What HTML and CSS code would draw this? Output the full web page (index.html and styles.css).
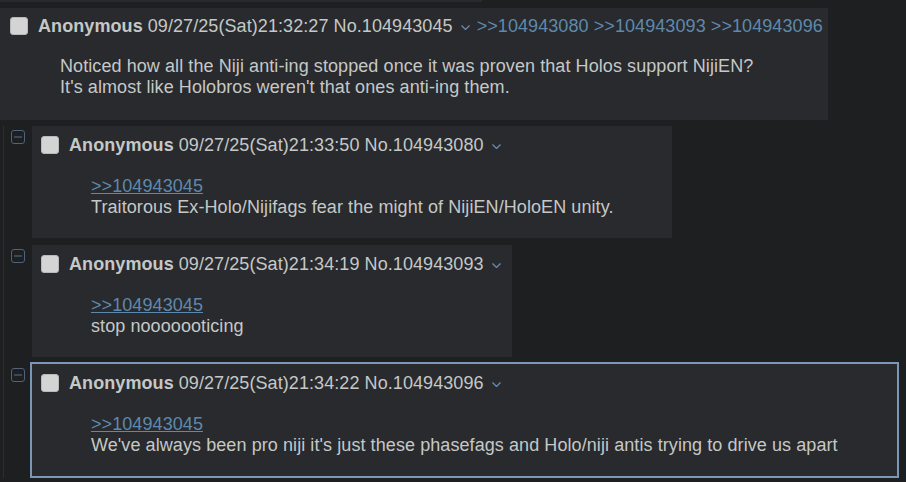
FILE: index.html
```html
<!DOCTYPE html>
<html>
<head>
<meta charset="utf-8">
<link rel="stylesheet" href="styles.css">
</head>
<body>
<div class="prev-tail"></div>
<div class="thread">
  <div class="post op">
    <div class="post-info">
      <span class="checkbox"></span>
      <span class="name">Anonymous</span>
      <span class="date">09/27/25(Sat)21:32:27</span>
      <span class="num">No.104943045</span>
      <svg class="menu" width="9" height="5" viewBox="0 0 9 5"><path d="M0.5 0.5 L4.5 4.5 L8.5 0.5" fill="none" stroke="#6b8fb2" stroke-width="1.2"/></svg>
      <span class="backlinks"><a class="backlink">&gt;&gt;104943080</a> <a class="backlink">&gt;&gt;104943093</a> <a class="backlink">&gt;&gt;104943096</a></span>
    </div>
    <blockquote class="message">Noticed how all the Niji anti-ing stopped once it was proven that Holos support NijiEN?<br>It's almost like Holobros weren't that ones anti-ing them.</blockquote>
  </div>

  <div class="replies">
    <div class="reply-row">
      <div class="side"><svg class="toggle" width="14" height="14" viewBox="0 0 14 14"><rect x="0.5" y="0.5" width="13" height="13" rx="2.5" fill="none" stroke="#50637a"/><path d="M3 7 H11" stroke="#50637a" stroke-width="1.2"/></svg></div>
      <div class="post reply">
        <div class="post-info">
          <span class="checkbox"></span>
          <span class="name">Anonymous</span>
          <span class="date">09/27/25(Sat)21:33:50</span>
          <span class="num">No.104943080</span>
          <svg class="menu" width="9" height="5" viewBox="0 0 9 5"><path d="M0.5 0.5 L4.5 4.5 L8.5 0.5" fill="none" stroke="#6b8fb2" stroke-width="1.2"/></svg>
        </div>
        <blockquote class="message"><a class="quotelink">&gt;&gt;104943045</a><br>Traitorous Ex-Holo/Nijifags fear the might of NijiEN/HoloEN unity.</blockquote>
      </div>
    </div>

    <div class="reply-row">
      <div class="side"><svg class="toggle" width="14" height="14" viewBox="0 0 14 14"><rect x="0.5" y="0.5" width="13" height="13" rx="2.5" fill="none" stroke="#50637a"/><path d="M3 7 H11" stroke="#50637a" stroke-width="1.2"/></svg></div>
      <div class="post reply">
        <div class="post-info">
          <span class="checkbox"></span>
          <span class="name">Anonymous</span>
          <span class="date">09/27/25(Sat)21:34:19</span>
          <span class="num">No.104943093</span>
          <svg class="menu" width="9" height="5" viewBox="0 0 9 5"><path d="M0.5 0.5 L4.5 4.5 L8.5 0.5" fill="none" stroke="#6b8fb2" stroke-width="1.2"/></svg>
        </div>
        <blockquote class="message"><a class="quotelink">&gt;&gt;104943045</a><br>stop nooooooticing</blockquote>
      </div>
    </div>

    <div class="reply-row">
      <div class="side"><svg class="toggle" width="14" height="14" viewBox="0 0 14 14"><rect x="0.5" y="0.5" width="13" height="13" rx="2.5" fill="none" stroke="#50637a"/><path d="M3 7 H11" stroke="#50637a" stroke-width="1.2"/></svg></div>
      <div class="post reply highlight">
        <div class="post-info">
          <span class="checkbox"></span>
          <span class="name">Anonymous</span>
          <span class="date">09/27/25(Sat)21:34:22</span>
          <span class="num">No.104943096</span>
          <svg class="menu" width="9" height="5" viewBox="0 0 9 5"><path d="M0.5 0.5 L4.5 4.5 L8.5 0.5" fill="none" stroke="#6b8fb2" stroke-width="1.2"/></svg>
        </div>
        <blockquote class="message"><a class="quotelink">&gt;&gt;104943045</a><br>We've always been pro niji it's just these phasefags and Holo/niji antis trying to drive us apart</blockquote>
      </div>
    </div>
  </div>
</div>
</body>
</html>
```
FILE: styles.css
```css
html, body {
  margin: 0;
  padding: 0;
  background: #1d1f21;
}
body {
  font-family: "Liberation Sans", Arial, sans-serif;
  font-size: 18px;
  line-height: 21px;
  letter-spacing: 0.08px;
  color: #c5c8c6;
}
.prev-tail {
  width: 482px;
  height: 2px;
  background: #282a2e;
  margin-bottom: 6px;
}
.post {
  background: #282a2e;
  display: table;
}
.op {
  padding: 8px 5px 22px 10px;
  margin-bottom: 6px;
}
.reply {
  padding: 9px 5px 20px 9px;
}
.post-info {
  display: flex;
  align-items: center;
  white-space: nowrap;
  height: 21px;
}
.checkbox {
  width: 16px;
  height: 16px;
  background: #d4d4d4;
  border: 1px solid #b9b9b9;
  border-radius: 3px;
  box-sizing: content-box;
  margin-right: 10px;
  flex: none;
  position: relative;
  top: -1px;
}
.name {
  font-weight: bold;
  margin-right: 5px;
}
.date {
  margin-right: 5px;
}
.menu {
  margin: 1px 6px 0 8px;
  flex: none;
}
.backlinks {
  margin-left: 1px;
  color: #5f89ac;
}
.backlink {
  color: #5f89ac;
}
.message {
  margin: 19px 54px 0 50px;
}
.reply .message {
  margin-top: 20px;
}
.quotelink {
  color: #5f89ac;
  text-decoration: underline;
}
.replies {
  margin-left: 3px;
  border-left: 1px solid #2b2d31;
}
.reply-row {
  display: flex;
  align-items: flex-start;
  margin-bottom: 7px;
}
.side {
  width: 28px;
  flex: none;
  padding-top: 4px;
}
.toggle {
  display: block;
  margin-left: 7px;
}
.highlight {
  border: 2px solid #7a98b5;
  margin: -2px 0 0 -2px;
}
```
